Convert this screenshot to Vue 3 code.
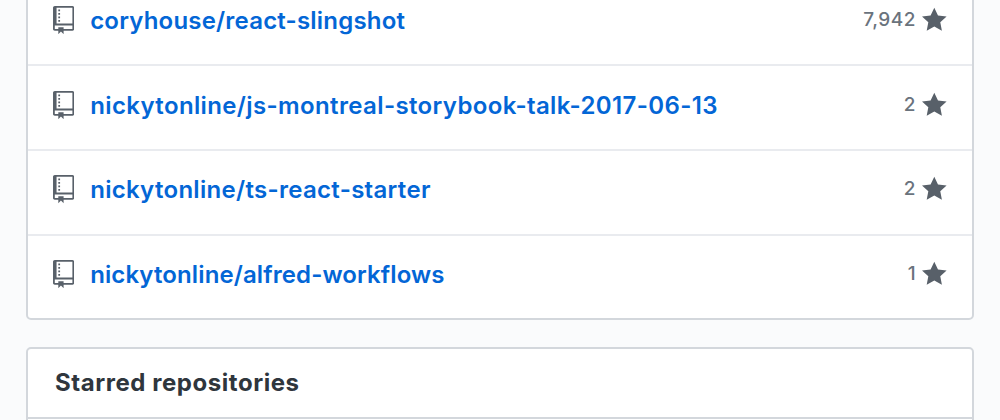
<script setup>
const repos = [
  { id: 'slingshot', name: 'coryhouse/react-slingshot', stars: '7,942' },
  { id: 'storybook', name: 'nickytonline/js-montreal-storybook-talk-2017-06-13', stars: '2' },
  { id: 'starter', name: 'nickytonline/ts-react-starter', stars: '2' },
  { id: 'alfred', name: 'nickytonline/alfred-workflows', stars: '1' },
]
</script>

<template>
  <main class="page">
    <ul class="box repos">
      <li v-for="repo in repos" :key="repo.id" class="row">
        <svg class="book" viewBox="0 0 12 16" aria-hidden="true">
          <path fill-rule="evenodd" d="M4 9H3V8h1v1zm0-3H3v1h1V6zm0-2H3v1h1V4zm0-2H3v1h1V2zm8-1v12c0 .55-.45 1-1 1H6v2l-1.500-1.500L3 16v-2H1c-.55 0-1-.45-1-1V1c0-.55.45-1 1-1h10c.55 0 1 .45 1 1zm-1 10H1v2h2v-1h3v1h5v-2zm0-10H2v9h9V1z" />
        </svg>
        <a :class="['name', repo.id]">{{ repo.name }}</a>
        <span class="count">{{ repo.stars }}</span>
        <svg class="star" viewBox="0 0 14 16" aria-hidden="true">
          <path d="M14 6l-4.900-.64L7 1 4.900 5.360 0 6l3.600 3.260L2.670 14 7 11.670 11.330 14l-.93-4.740L14 6z" />
        </svg>
      </li>
    </ul>
    <section class="box starred">
      <h3 class="title">Starred repositories</h3>
    </section>
  </main>
</template>

<style>
body {
  background: #fafbfc;
}
</style>

<style scoped>
.page {
  box-sizing: border-box;
  height: 420px;
  overflow: hidden;
  padding: 0 26px;
  font-family: Inter, "Liberation Sans", sans-serif;
}
.box {
  box-sizing: border-box;
  margin: 0;
  padding: 0;
  background: #fff;
  border: 2px solid #d3d7dc;
  border-radius: 5px;
  list-style: none;
}
.repos {
  height: 340.4px;
  margin-top: -20.4px;
}
.row {
  box-sizing: border-box;
  display: flex;
  align-items: flex-start;
  height: 84.67px;
  padding: 24.4px 25.4px 0 25px;
  border-bottom: 2px solid #e9ebef;
}
.row:last-child {
  border-bottom: 0;
}
.book {
  flex: none;
  width: 21.2px;
  height: 28.2px;
  fill: #586069;
}
.name {
  flex: 1;
  margin-left: 16px;
  color: #0366d6;
  font-size: 24px;
  font-weight: 600;
  line-height: 30px;
  white-space: nowrap;
}
.slingshot {
  letter-spacing: 0.2px;
}
.storybook {
  letter-spacing: 0.37px;
}
.starter {
  letter-spacing: 0.3px;
}
.alfred {
  letter-spacing: 0.11px;
}
.count {
  margin-right: 6px;
  color: #6a737d;
  font-size: 19px;
  font-weight: 500;
  letter-spacing: 0.5px;
  line-height: 27px;
}
.star {
  flex: none;
  width: 24.6px;
  height: 28.2px;
  fill: #586069;
}
.starred {
  height: 120px;
  margin-top: 27px;
}
.title {
  box-sizing: border-box;
  height: 70px;
  margin: 0;
  padding: 18px 27px;
  border-bottom: 2px solid #d3d7dc;
  color: #2f363d;
  font-size: 24px;
  font-weight: 700;
  letter-spacing: 0.55px;
  line-height: 32px;
}
</style>
